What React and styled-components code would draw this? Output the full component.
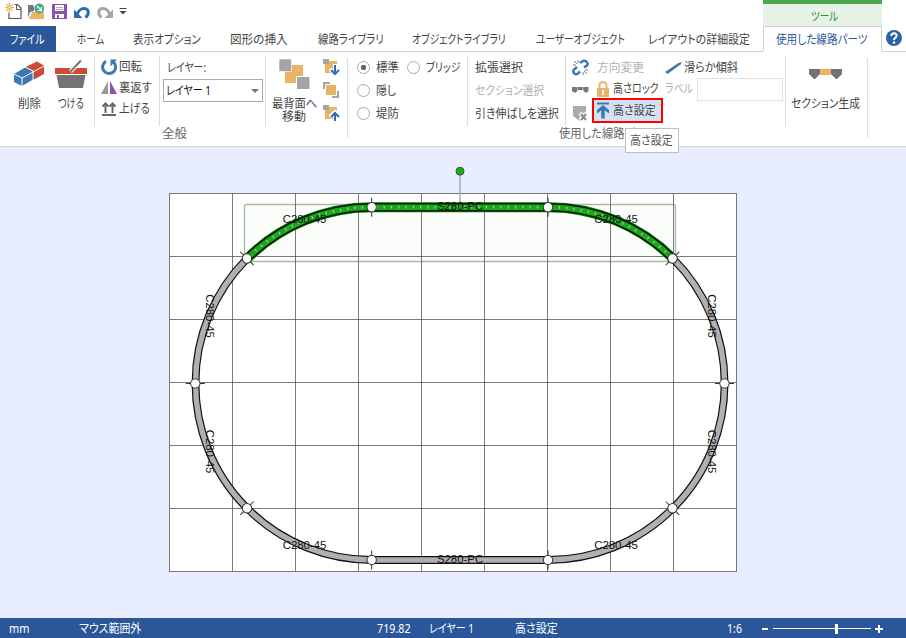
import React, { useLayoutEffect, useRef, useState } from "react"
import styled, { createGlobalStyle, css } from "styled-components"

const GlobalStyle = createGlobalStyle`
  * {
    box-sizing: border-box;
  }
  body {
    margin: 0;
    overflow: hidden;
    color: #444;
    font: 12px/16px "Noto Sans", "Noto Sans CJK JP", sans-serif;
    font-feature-settings: "palt";
  }
`

const Window = styled.div`
  display: flex;
  flex-direction: column;
  width: 906px;
  height: 638px;
  background: #fff;
`

const FitBox = styled.span`
  display: inline-block;
  flex: none;
  width: ${(p) => p.$w}px;
  white-space: nowrap;
`

const FitInner = styled.span`
  display: inline-block;
  transform-origin: 0 50%;
`

const TitleBar = styled.div`
  display: flex;
  flex: none;
  height: 26px;
  padding-right: 24px;
`

const QuickAccess = styled.div`
  display: flex;
  flex: 1;
  align-items: flex-start;
  padding: 2px 0 0 5px;
`

const ToolHeader = styled.div`
  width: 119px;
  border-top: 4px solid #4ca64c;
  background: #e6f2e6;
  color: #2f8f38;
  text-align: center;
  padding: 5px 0 0 3px;
`

const TabBar = styled.div`
  display: flex;
  flex: none;
  height: 26px;
`

const Tab = styled.div`
  width: ${(p) => p.$w}px;
  padding-top: 6px;
  text-align: center;
  border-bottom: 1px solid #d2d2d2;
  ${(p) => p.$file && css`
    padding-right: 1px;
    background: #2b579a;
    border-color: #2b579a;
    color: #fff;
  `}
  ${(p) => p.$active && css`
    padding: 5px 1px 0 0;
    border: 1px solid #d2d2d2;
    border-bottom-color: #fff;
    color: #2b579a;
  `}
`

const HelpCell = styled.div`
  flex: 1;
  padding: 3px 0 0 3px;
  border-bottom: 1px solid #d2d2d2;
`

const Ribbon = styled.div`
  display: flex;
  flex: none;
  height: 95px;
  border-bottom: 1px solid #d2d2d2;
`

const Group = styled.div`
  display: flex;
  flex-direction: column;
  width: ${(p) => p.$w}px;
  background: linear-gradient(#dcdcdc, #dcdcdc) no-repeat right 6px / 1px 80px;
`

const GroupBody = styled.div`
  display: flex;
  height: 74px;
  padding-top: 4px;
`

const GroupLabel = styled.div`
  text-align: center;
  color: #666;
  line-height: 15px;
`

const Section = styled.div`
  display: flex;
  width: ${(p) => p.$w}px;
  height: 70px;
  padding-left: ${(p) => p.$pad || 0}px;
  border-right: ${(p) => (p.$last ? 0 : 1)}px solid #dcdcdc;
`

const Column = styled.div`
  display: flex;
  flex-direction: column;
  width: ${(p) => p.$w}px;
  padding-top: ${(p) => p.$top || 0}px;
  padding-left: ${(p) => p.$left || 0}px;
  gap: ${(p) => p.$gap || 0}px;
`

const BigButton = styled.div`
  display: flex;
  flex-direction: column;
  align-items: center;
  width: ${(p) => p.$w}px;
  gap: ${(p) => p.$gap || 0}px;
  line-height: 13px;
`

const Command = styled.div`
  display: flex;
  flex: none;
  align-items: center;
  height: ${(p) => p.$h || 21}px;
  padding-left: ${(p) => p.$left || 0}px;
  gap: ${(p) => p.$gap || 0}px;
  color: ${(p) => (p.$disabled ? "#b1b1b1" : "#444")};
`

const SelectLabel = styled.div`
  padding-left: 4px;
`

const Select = styled.div`
  display: flex;
  align-items: center;
  justify-content: space-between;
  width: 100px;
  height: 23px;
  padding: 0 3px 0 2px;
  border: 1px solid #ababab;
  color: #111;
`

const Caret = styled.i`
  border: 4px solid transparent;
  border-top-color: #777;
  border-bottom: 0;
`

const Dot = styled.i`
  width: 13px;
  height: 13px;
  border: 1px solid #ababab;
  border-radius: 50%;
  background: ${(p) => (p.$on ? "radial-gradient(#666 0 2.4px, #fff 3px)" : "#fff")};
`

const LabelInput = styled.div`
  width: 86px;
  height: 23px;
  border: 1px solid #e1e1e1;
`

const HighlightButton = styled.div`
  position: relative;
  display: flex;
  flex: none;
  align-items: center;
  gap: 3px;
  width: 71px;
  height: 25px;
  margin-top: -1px;
  padding-left: 2px;
  border: 2px solid #f00;
  background: #d5e1f2;
`

const Tooltip = styled.div`
  position: absolute;
  z-index: 2;
  left: 31px;
  top: 28px;
  width: 54px;
  height: 25px;
  padding: 4px 0 0 4px;
  border: 1px solid #bebebe;
  background: #fff;
  color: #555;
`

const Canvas = styled.svg`
  display: block;
  flex: none;
  background: #e8eeff;
  font-family: "Liberation Sans", Arial, sans-serif;
  font-size: 11.4px;
`

const StatusBar = styled.div`
  display: flex;
  flex: 1;
  align-items: center;
  padding: 2px 0 0 9px;
  background: #2b579a;
  color: #fff;
`

const StatusItem = styled.div`
  width: ${(p) => p.$w}px;
`

const Icon = styled.svg`
  display: block;
  flex: none;
  margin-left: ${(p) => p.$ml || 0}px;
  margin-right: ${(p) => p.$mr || 0}px;
`

// Squeezes a label horizontally so that it takes exactly w pixels.
function Fit({ w, children }) {
  const ref = useRef(null)
  const [scale, setScale] = useState(1)
  useLayoutEffect(() => {
    setScale(w / ref.current.offsetWidth)
  }, [w, children])
  return (
    <FitBox $w={w}>
      <FitInner ref={ref} style={{ transform: `scaleX(${scale})` }}>{children}</FitInner>
    </FitBox>
  )
}

const tabs = [
  ["ホーム", 27, 69],
  ["表示オプション", 68, 84],
  ["図形の挿入", 58, 100],
  ["線路ライブラリ", 66, 83],
  ["オブジェクトライブラリ", 94, 134],
  ["ユーザーオブジェクト", 89, 108],
  ["レイアウトの詳細設定", 102, 129],
]

function QuickIcons() {
  return (
    <Icon width="124" height="20" viewBox="5 2 124 20" fill="none">
      <path d="M14.5 4.500h3l3.500 3.500v10.500h-12v-6" stroke="#555" strokeWidth="1.200" />
      <path d="M16.500 4.500v5h4" stroke="#555" />
      <path d="M9.500 3v9M5 7.500h9M6.300 4.300l6.400 6.400M12.700 4.300l-6.400 6.400" stroke="#e9a94b" strokeWidth="1.200" />
      <circle cx="9.500" cy="7.500" r="1.500" fill="#fff" stroke="#e9a94b" />
      <path d="M28 18V5h5l1 2v4l-4 1z" fill="#777" />
      <path d="M29 19l3-7h12v7z" fill="#eab464" />
      <circle cx="39.300" cy="8.500" r="4.900" fill="#3fab80" />
      <path d="M37 6l4.500 4.500M41.500 7v3.700h-4" stroke="#fff" strokeWidth="1.300" />
      <path d="M52 4h15v15H52z" fill="#8e4fae" />
      <path d="M55 5h9v6h-9zM55 14h9v4h-9z" fill="#fff" />
      <path d="M56 7.500h7M56 9.500h7" stroke="#aaa" />
      <path d="M57 15h2v3h-2z" fill="#8e4fae" />
      <path d="M77 15c1-4 4-7 8-6.500 4 .8 4.500 6 .5 9" stroke="#2e6db4" strokeWidth="3" />
      <path d="M74 9.500V18h8.500z" fill="#2e6db4" />
      <path d="M110 15c-1-4-4-7-8-6.500-4 .8-4.500 6-.5 9" stroke="#a5a5a5" strokeWidth="3" />
      <path d="M113 9.500V18h-8.500z" fill="#a5a5a5" />
      <path d="M119.500 8.500h7" stroke="#444" />
      <path d="M119.500 11h7l-3.500 3.500z" fill="#444" />
    </Icon>
  )
}

function StackIcon({ kind }) {
  return (
    <Icon width="17" height="17" viewBox="0 0 17 17" fill="none">
      {kind === "middle" ? (
        <>
          <path d="M0 0h7v7H0zM9 9h7v7H9z" fill="#a5a5a5" />
          <path d="M2.500 2.500h11v11h-11z" fill="#eab464" stroke="#fff" />
        </>
      ) : (
        <>
          <path d="M2 2h12v12H2z" fill="#eab464" />
          <path d="M0 0h6v5H0z" fill="#a5a5a5" />
          <path d={kind === "down" ? "M12 5v10M7 10l5 5 5-5" : "M12 17V7M7 12l5-5 5 5"} stroke="#fff" strokeWidth="4" />
          <path d={kind === "down" ? "M12 6v9M8 11l4 4 4-4" : "M12 16V8M8 12l4-4 4 4"} stroke="#2e6db4" strokeWidth="2" />
        </>
      )}
    </Icon>
  )
}

function Radio({ label, w, on }) {
  return <Command $h={23} $gap={6}><Dot $on={on} /><Fit w={w}>{label}</Fit></Command>
}

function GeneralGroup() {
  return (
    <Group $w={348}>
      <GroupBody>
        <Section $w={95} $pad={8}>
          <BigButton $w={42} $gap={7}>
            <Icon width="30" height="34" viewBox="14 56 30 34">
              <path d="M14 74L26 67l8 4v8L22 86l-8-4z" fill="#3d78b5" />
              <path d="M25.500 67L37 61.500l7 4V74l-10 5.500V71z" fill="#cc4b32" />
              <path d="M14 74l8 4 22-12M22 78v8M25 67l8 4v9" fill="none" stroke="#fff" />
            </Icon>
            <Fit w={23}>削除</Fit>
          </BigButton>
          <BigButton $w={42} $gap={7}>
            <Icon width="32" height="34" viewBox="55 56 32 34">
              <path d="M55 68h32v6H55z" fill="#cc4b32" />
              <path d="M56.500 75h29L83 88H59z" fill="#737373" />
              <path d="M70.500 71.500L81 60.500" stroke="#fff" strokeWidth="4" />
              <path d="M70.500 71.500L81 60.500" stroke="#777" strokeWidth="2" />
            </Icon>
            <Fit w={26}>つける</Fit>
          </BigButton>
        </Section>
        <Section $w={65} $pad={6}>
          <Column>
            <Command $gap={1}>
              <Icon width="17" height="18" viewBox="0 0 17 18" fill="none" stroke="#3d78b5">
                <path d="M5 3.300A6.500 6.500 0 1 0 12 3.800" strokeWidth="3" />
                <path d="M16 1.500H9.500v7z" fill="#3d78b5" stroke="none" />
              </Icon>
              <Fit w={23}>回転</Fit>
            </Command>
            <Command $gap={1}>
              <Icon width="17" height="15" viewBox="0 0 17 15"><path d="M7 1v13H0z" fill="#999" /><path d="M9 1v13h7z" fill="#8e4fae" /></Icon>
              <Fit w={33}>裏返す</Fit>
            </Command>
            <Command $gap={1}>
              <Icon width="17" height="16" viewBox="0 0 17 16" fill="none" stroke="#666" strokeWidth="2">
                <path d="M4.500 12V3M11.500 12V3" />
                <path d="M1.500 5.500l3-3 3 3M8.500 5.500l3-3 3 3M1 14h14" />
              </Icon>
              <Fit w={31}>上げる</Fit>
            </Command>
          </Column>
        </Section>
        <Section $w={106} $pad={3}>
          <Column $w={100} $top={4} $gap={3}>
            <SelectLabel><Fit w={39}>レイヤー:</Fit></SelectLabel>
            <Select><Fit w={45}>レイヤー 1</Fit><Caret /></Select>
          </Column>
        </Section>
        <Section $w={81} $pad={5} $last>
          <BigButton $w={46}>
            <Icon width="31" height="41" viewBox="279 56 31 41">
              <path d="M285 65h18v18h-18z" fill="#eab464" />
              <path d="M279 59h12.500v12.500H279z" fill="#a5a5a5" stroke="#fff" strokeWidth=".6" />
              <path d="M296.500 76.500H310v13h-13.500z" fill="#a5a5a5" stroke="#fff" />
            </Icon>
            <Fit w={45}>最背面へ</Fit>
            <Fit w={24}>移動</Fit>
          </BigButton>
          <Column $top={3} $left={6} $gap={6}>
            <StackIcon kind="down" />
            <StackIcon kind="middle" />
            <StackIcon kind="up" />
          </Column>
        </Section>
      </GroupBody>
      <GroupLabel><Fit w={25}>全般</Fit></GroupLabel>
    </Group>
  )
}

function TrackGroup() {
  return (
    <Group $w={520}>
      <GroupBody>
        <Section $w={120} $pad={9}>
          <Column $w={50}>
            <Radio label="標準" w={23} on />
            <Radio label="隠し" w={20} />
            <Radio label="堤防" w={23} />
          </Column>
          <Radio label="ブリッジ" w={35} />
        </Section>
        <Section $w={98} $pad={7}>
          <Column>
            <Command $h={23}><Fit w={48}>拡張選択</Fit></Command>
            <Command $h={23} $disabled><Fit w={69}>セクション選択</Fit></Command>
            <Command $h={23}><Fit w={84}>引き伸ばしを選択</Fit></Command>
          </Column>
        </Section>
        <Section $w={220} $pad={6}>
          <Column $w={20}>
            <Command $h={23}>
              <Icon width="17" height="17" viewBox="0 0 17 17" fill="none" stroke="#3d78b5" strokeWidth="2.500">
                <path d="M8 4l2-1.500c3-2 7 1 5 4L12 8.500M8 12.500l-2 2c-3 2-6-1-4-4L5 8" />
                <path d="M2 2l3 3M6 1v3M1 6h3M15 15l-3-3M11 16v-3M16 11h-3" stroke="#777" strokeWidth="1" />
              </Icon>
            </Command>
            <Command $h={22}>
              <Icon width="17" height="6"><path d="M0 0h16.500v4l-1.500 1.500h-2L11 3H6L4 5.500H2L0 4z" fill="#777" /><path d="M5.500 0v3M11 0v3" stroke="#fff" strokeWidth=".5" /></Icon>
            </Command>
            <Command $h={24}>
              <Icon width="17" height="17" viewBox="0 0 17 17"><path d="M1 1h13v9l-6 6-7-5z" fill="#aaa" /><path d="M8 8l7 7M15 8l-7 7" stroke="#fff" strokeWidth="4" /><path d="M9 9l5 6M14 9l-5 6" stroke="#888" strokeWidth="2" /></Icon>
            </Command>
          </Column>
          <Column $w={192}>
            <Command $disabled $h={23} $left={5}>
              <Fit w={47}>方向変更</Fit>
              <Icon width="17" height="14" viewBox="0 0 17 14" $ml={21} $mr={2}><path d="M0 11L13.500 2 17 1l-1.500 2.500L2.500 13z" fill="#3d78b5" /></Icon>
              <Command $h={23}><Fit w={54}>滑らか傾斜</Fit></Command>
            </Command>
            <Command $h={20} $gap={4}>
              <Icon width="12" height="16" viewBox="0 0 12 16" $ml={5}>
                <path d="M2.500 8V4.500a3.500 3.500 0 0 1 7 0V8" fill="none" stroke="#eab464" strokeWidth="2" />
                <path d="M0 7h12v9H0z" fill="#eab464" /><path d="M5 9h2v5H5z" fill="#fff" />
              </Icon>
              <Fit w={46}>高さロック</Fit>
              <Command $disabled $left={2}><Fit w={28}>ラベル</Fit></Command>
              <LabelInput />
            </Command>
            <HighlightButton>
              <Icon width="14" height="17" viewBox="0 0 14 17" fill="none" stroke="#3d78b5"><path d="M1 1.500h12" strokeWidth="2" /><path d="M7 16.500V6" strokeWidth="3.500" /><path d="M7 3l6 5v3.500L7 7l-6 4.500V8z" fill="#3d78b5" stroke="none" /></Icon>
              <Fit w={43}>高さ設定</Fit>
              <Tooltip><Fit w={43}>高さ設定</Fit></Tooltip>
            </HighlightButton>
          </Column>
        </Section>
        <Section $w={81} $last>
          <BigButton $w={79} $gap={14}>
            <Icon width="33" height="27" viewBox="0 0 33 27"><path d="M0 13h11v5l-5 5h-1l-5-5zM22 13h11v5l-5 5h-1l-5-5z" fill="#737373" /><path d="M11 13h11v6H11z" fill="#eab464" /></Icon>
            <Fit w={69}>セクション生成</Fit>
          </BigButton>
        </Section>
      </GroupBody>
      <GroupLabel><Fit w={98}>使用した線路パーツ</Fit></GroupLabel>
    </Group>
  )
}

const verticals = [232.5, 295.5, 358.5, 421.5, 484.5, 547.5, 610.5, 673.5]
const horizontals = [256.5, 319.5, 382.5, 445.5, 508.5]
const loop = "M247.200 258.500A176.400 176.400 0 0 0 195.500 383.500A176.400 176.400 0 0 0 371.900 560H548.200A176.400 176.400 0 0 0 724.600 383.500A176.400 176.400 0 0 0 672.900 258.500"
const raised = "M247.200 258.500A176.400 176.400 0 0 1 371.900 207.200H548.200A176.400 176.400 0 0 1 672.900 258.500"

// x, y and the angle of the tick that crosses the joint
const joints = [
  [371.700, 207.200, 90], [548, 207.200, 90], [672.500, 258.500, -45], [724.500, 383.500, 0], [672.500, 508.200, 45],
  [548, 560, 90], [371.700, 560, 90], [247, 508.200, -45], [195.300, 383.500, 0], [247, 258.500, 45],
]

const pieces = [
  ["C280-45", 304.500, 223.300, 0], ["S280-PC", 460, 210, 0], ["C280-45", 616, 223.300, 0],
  ["C280-45", 206, 316, 90], ["C280-45", 708, 316, 90], ["C280-45", 206, 451.500, 90], ["C280-45", 708, 451.500, 90],
  ["C280-45", 304.500, 549.300, 0], ["S280-PC", 460, 563, 0], ["C280-45", 616, 549.300, 0],
]

function Plan() {
  return (
    <Canvas width="906" height="471" viewBox="0 147 906 471" fill="none">
      <rect x="169.500" y="193.500" width="567" height="378" fill="#fff" stroke="#777" />
      <rect x="244.500" y="204.500" width="431" height="57" rx="2" fill="#fafdfa" stroke="#aab8aa" strokeWidth="1.300" />
      {verticals.map((x) => <path key={x} d={`M${x} 194v377`} stroke="#4d4d4d" strokeOpacity=".75" />)}
      {horizontals.map((y) => <path key={y} d={`M170 ${y}h566`} stroke="#4d4d4d" strokeOpacity=".75" />)}
      <path d="M460 175v28" stroke="#aaa8b8" strokeWidth="1.500" />
      <circle cx="460" cy="171.200" r="4" fill="#1aab1a" stroke="#375b37" />
      <path d={loop} stroke="#111" strokeWidth="7.800" />
      <path d={loop} stroke="#b0b0b0" strokeWidth="5.400" />
      <path d={raised} stroke="#087a08" strokeWidth="10" />
      <path d={raised} stroke="#031c03" strokeWidth="8.600" />
      <path d={raised} stroke="#18a818" strokeWidth="5.600" />
      <path d={raised} stroke="#a9c8a9" strokeWidth="2.800" strokeDasharray="1.200 6.100" strokeDashoffset="-4" />
      {joints.map(([x, y, a]) => (
        <g key={`${x} ${y}`} transform={`translate(${x} ${y}) rotate(${a})`} stroke="#333">
          <path d="M-9.500 0h19" />
          <circle r="4.700" fill="#fff" />
        </g>
      ))}
      {pieces.map(([name, x, y, a]) => (
        <text key={`${x} ${y}`} transform={`translate(${x} ${y}) rotate(${a})`} textAnchor="middle" fill="#111">{name}</text>
      ))}
    </Canvas>
  )
}

export default function App() {
  return (
    <Window>
      <GlobalStyle />
      <TitleBar>
        <QuickAccess><QuickIcons /></QuickAccess>
        <ToolHeader><Fit w={27}>ツール</Fit></ToolHeader>
      </TitleBar>
      <TabBar>
        <Tab $w={56} $file><Fit w={35}>ファイル</Fit></Tab>
        {tabs.map(([label, textWidth, w]) => (
          <Tab key={label} $w={w}><Fit w={textWidth}>{label}</Fit></Tab>
        ))}
        <Tab $w={119} $active><Fit w={92}>使用した線路パーツ</Fit></Tab>
        <HelpCell>
          <Icon width="18" height="18" viewBox="0 0 18 18">
            <circle cx="9" cy="9" r="8" fill="#2b65a8" />
            <path d="M6.300 7c0-3.600 5.600-3.400 5.400-.2C11.600 8.700 9 8.700 9 11" fill="none" stroke="#fff" strokeWidth="2" />
            <circle cx="9" cy="13.500" r="1.200" fill="#fff" />
          </Icon>
        </HelpCell>
      </TabBar>
      <Ribbon>
        <GeneralGroup />
        <TrackGroup />
      </Ribbon>
      <Plan />
      <StatusBar>
        <StatusItem $w={70}><Fit w={20}>mm</Fit></StatusItem>
        <StatusItem $w={298}><Fit w={62}>マウス範囲外</Fit></StatusItem>
        <StatusItem $w={52}><Fit w={34}>719.82</Fit></StatusItem>
        <StatusItem $w={86}><Fit w={45}>レイヤー 1</Fit></StatusItem>
        <StatusItem $w={212}><Fit w={43}>高さ設定</Fit></StatusItem>
        <StatusItem $w={34}><Fit w={15}>1:6</Fit></StatusItem>
        <Icon width="124" height="12" stroke="#fff"><path d="M1 6h6M114 6h8M118 2v8" strokeWidth="2" /><path d="M12 5.500h98" /><path d="M75.500 1v10" strokeWidth="3" /></Icon>
      </StatusBar>
    </Window>
  )
}
